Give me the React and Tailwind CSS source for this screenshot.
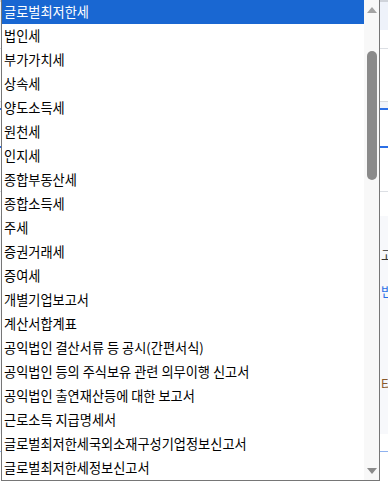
import React from "react"

const taxItems = [
  "글로벌최저한세",
  "법인세",
  "부가가치세",
  "상속세",
  "양도소득세",
  "원천세",
  "인지세",
  "종합부동산세",
  "종합소득세",
  "주세",
  "증권거래세",
  "증여세",
  "개별기업보고서",
  "계산서합계표",
  "공익법인 결산서류 등 공시(간편서식)",
  "공익법인 등의 주식보유 관련 의무이행 신고서",
  "공익법인 출연재산등에 대한 보고서",
  "근로소득 지급명세서",
  "글로벌최저한세국외소재구성기업정보신고서",
  "글로벌최저한세정보신고서",
]

export default function App() {
  const selected = 0

  return (
    <div
      className="relative w-[388px] h-[482px] overflow-hidden bg-white"
      style={{ fontFamily: '"Noto Sans CJK KR", "Noto Sans", sans-serif' }}
    >
      {/* page behind the popup, only its right edge shows */}
      <div className="flex flex-col w-full h-full">
        <div className="h-[2px] bg-[#cfd3da]" />
        <div className="h-[28px] bg-[#eef2fa]" />
        <div className="h-[18px] bg-white" />
        <div className="h-px bg-[#dcdfe4]" />
        <div className="h-[52px] bg-white" />
        <div className="h-px bg-[#d6d9de]" />
        <div className="h-[6px] bg-[#f1f4fa]" />
        <div className="h-[2px] bg-[#2b6fe6]" />
        <div className="h-[36px] bg-white" />
        <div className="h-[2px] bg-[#2b6fe6]" />
        <div className="h-[43px] bg-white" />
        <div className="h-px bg-[#dcdfe4]" />
        <div className="h-[24px] bg-white" />
        <div className="flex flex-col h-[218px] bg-[#f7f8fb] pl-[381px] pt-[32px] text-[13px] leading-none">
          <span className="text-[#333]">고</span>
          <span className="mt-[23px] text-[#2b6fe6]">반</span>
          <span className="mt-[80px] text-[#8a5a2b]">타</span>
        </div>
        <div className="h-[17px] bg-white" />
        <div className="h-px bg-[#8fb2ef]" />
        <div className="flex-1 bg-white" />
      </div>

      {/* select popup */}
      <div className="absolute left-px top-[-1px] w-[379px] h-[482px] border border-[#767676] bg-white flex">
        <ul className="flex-1 flex flex-col overflow-hidden">
          {taxItems.map((item, i) => (
            <li
              key={item}
              className={`h-[24px] shrink-0 flex items-center pl-[2px] text-[13.2px] whitespace-nowrap ${
                i === selected ? "bg-[#1967d2] text-white" : "text-black"
              }`}
            >
              {item}
            </li>
          ))}
        </ul>

        {/* scrollbar */}
        <div className="w-[15px] bg-[#f8f8f8] flex flex-col items-center">
          <svg width="10" height="6" viewBox="0 0 10 6" className="mt-[7px]">
            <path d="M0 6 L5 0 L10 6 Z" fill="#a3a3a3" />
          </svg>
          <div className="mt-[38px] w-[10px] h-[129px] rounded-full bg-[#8a8a8a]" />
          <div className="flex-1" />
          <svg width="10" height="6" viewBox="0 0 10 6" className="mb-[6px]">
            <path d="M0 0 L10 0 L5 6 Z" fill="#8a8a8a" />
          </svg>
        </div>
      </div>
    </div>
  )
}
